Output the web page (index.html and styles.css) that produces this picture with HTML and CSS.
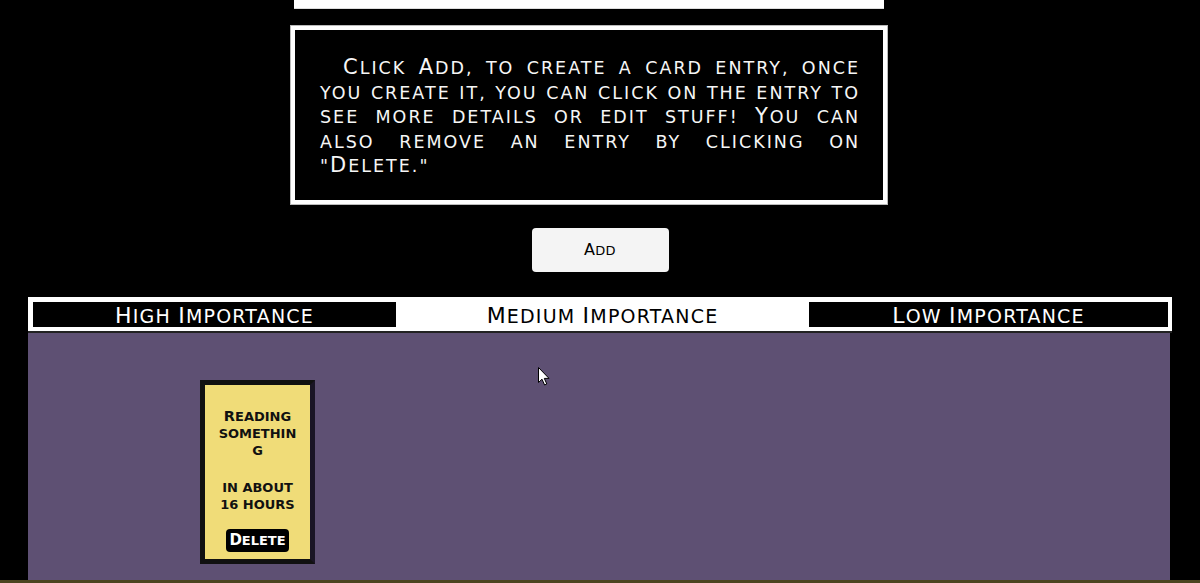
FILE: index.html
```html
<!DOCTYPE html>
<html lang="en">
<head>
<meta charset="utf-8">
<title>Cards</title>
<link rel="stylesheet" href="styles.css">
</head>
<body>
<div class="page">
  <div class="intro">
    <div class="topbar"></div>
    <div class="instructions">
      <p><span class="cap">C</span>lick <span class="cap">A</span>dd, to create a card entry, once you create it, you can click on the entry to see more details or edit stuff! <span class="cap">Y</span>ou can also remove an entry by clicking on "<span class="cap">D</span>elete."</p>
    </div>
  </div>
  <div class="actions">
    <button class="add-btn"><span class="cap">A</span>dd</button>
  </div>
  <div class="board">
    <div class="tabs">
      <div class="tab tab-high"><span class="cap">H</span>igh <span class="cap">I</span>mportance</div>
      <div class="tab tab-medium"><span class="cap">M</span>edium <span class="cap">I</span>mportance</div>
      <div class="tab tab-low"><span class="cap">L</span>ow <span class="cap">I</span>mportance</div>
    </div>
    <div class="cards">
      <div class="card">
        <div class="card-title"><span class="cap">R</span>eading something</div>
        <div class="card-time">in about 16 hours</div>
        <button class="delete-btn"><span class="cap">D</span>elete</button>
      </div>
    </div>
  </div>
  <div class="footer-line"></div>
</div>
<svg class="cursor" width="12" height="19" viewBox="0 0 12 19" aria-hidden="true">
  <path d="M0.5 0.5 L0.5 15.5 L4 12.2 L6.6 18 L8.8 17 L6.3 11.4 L11 11.4 Z" fill="#fff" stroke="#000" stroke-width="1"/>
</svg>
</body>
</html>
```
FILE: styles.css
```css
html, body {
  margin: 0;
  padding: 0;
  background: #000;
}
body {
  font-family: "DejaVu Sans", "Liberation Sans", sans-serif;
  text-transform: uppercase;
  color: #fff;
  height: 583px;
  overflow: hidden;
  position: relative;
}
.cap {
  line-height: 0;
}
.page {
  display: flex;
  flex-direction: column;
}
.intro {
  width: 1178px;
  display: flex;
  flex-direction: column;
  align-items: center;
}
.topbar {
  width: 590px;
  height: 8px;
  background: #fff;
  border-bottom: 1px solid #ddd;
}
.instructions {
  margin-top: 17px;
  border: 4px solid #fff;
  outline: 1px solid #bbb;
  padding: 26px 23px 0 25px;
  box-sizing: border-box;
  width: 596px;
  height: 178px;
}
.instructions p {
  margin: 0;
  font-size: 17.5px;
  line-height: 24.6px;
  text-align: justify;
  text-indent: 23px;
  letter-spacing: 2px;
  color: #f6f6f6;
}
.instructions .cap {
  font-size: 21px;
}
.actions {
  display: flex;
  justify-content: center;
  padding-top: 24px;
}
.add-btn {
  width: 137px;
  height: 44px;
  background: #f4f4f4;
  border: none;
  border-radius: 4px;
  font-family: inherit;
  text-transform: uppercase;
  font-size: 13px;
  letter-spacing: 0.3px;
  color: #000;
  padding: 0;
}
.add-btn .cap {
  font-size: 16px;
}
.board {
  margin: 25px 28px 0 28px;
}
.tabs {
  display: grid;
  grid-template-columns: 363fr 413fr 359fr;
  background: #fff;
  padding: 5px 4px 4px 5px;
  height: 36px;
  box-sizing: border-box;
  border-bottom: 2px solid #222;
}
.tab {
  text-align: center;
  font-size: 19px;
  letter-spacing: 1.2px;
  height: 25px;
  line-height: 23px;
  padding-top: 3px;
  box-sizing: border-box;
}
.tab .cap {
  font-size: 22px;
}
.tab-high, .tab-low {
  background: #000;
  color: #fff;
}
.tab-medium {
  background: #fff;
  color: #000;
}
.cards {
  background: #5e5073;
  height: 247px;
  margin-right: 2px;
  padding: 47px 0 0 172px;
  box-sizing: border-box;
}
.card {
  width: 115px;
  height: 184px;
  box-sizing: border-box;
  background: #f0dc78;
  border: 5px solid #111;
  border-right-color: #1a1525;
  color: #111;
  font-weight: bold;
  font-size: 13px;
  line-height: 17px;
  text-align: center;
  padding: 23px 0 0 0;
  display: flex;
  flex-direction: column;
  align-items: center;
}
.card-title {
  width: 82px;
  overflow-wrap: anywhere;
}
.card-title .cap {
  font-size: 14.5px;
}
.card-time {
  margin-top: 20px;
  width: 82px;
}
.delete-btn {
  margin-top: 16px;
  background: #000;
  color: #fff;
  border: none;
  border-radius: 4px;
  font-family: inherit;
  text-transform: uppercase;
  font-weight: bold;
  font-size: 13px;
  width: 63px;
  height: 23px;
  padding: 0;
}
.delete-btn .cap {
  font-size: 15px;
}
.footer-line {
  height: 3px;
  background: #4b4420;
}
.cursor {
  position: absolute;
  left: 538px;
  top: 367px;
}
```
